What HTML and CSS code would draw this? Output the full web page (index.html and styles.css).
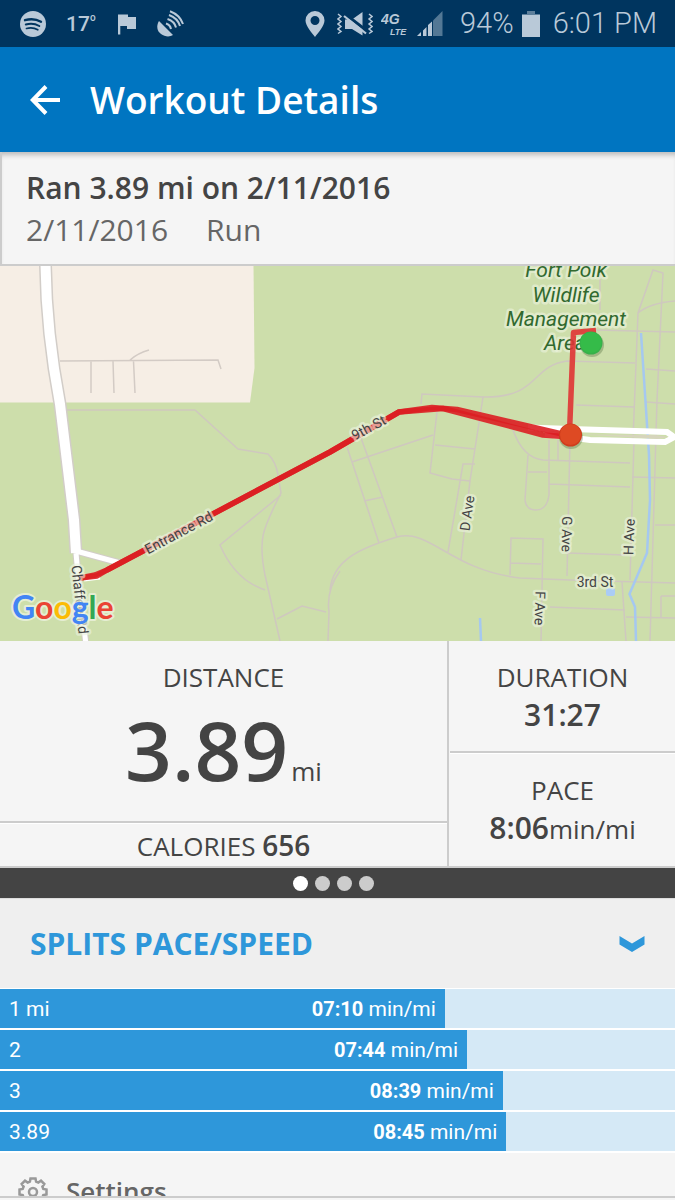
FILE: index.html
```html
<!DOCTYPE html>
<html lang="en">
<head>
    <meta charset="UTF-8">
    <meta name="viewport" content="width=device-width, initial-scale=1.0">
    <title>Workout Details</title>
    <link rel="stylesheet" href="styles.css">
</head>
<body>
    <div class="app">
        <div class="status-bar">
            <div class="status-left">
                <svg width="26" height="26" viewBox="0 0 26 26">
                    <circle cx="13" cy="13" r="13" fill="currentColor"/>
                    <g fill="none" stroke="#00355f" stroke-linecap="round">
                        <path d="M5 9.200c5.500-1.600 11.500-1 16 1.500" stroke-width="2.400"/>
                        <path d="M5.800 13.500c4.700-1.300 9.500-.8 13.500 1.500" stroke-width="2"/>
                        <path d="M6.500 17.500c4-1 8-.6 11.300 1.300" stroke-width="1.700"/>
                    </g>
                </svg>
                <span class="temp">17<sup>o</sup></span>
                <svg width="20" height="22" viewBox="0 0 20 22" fill="currentColor">
                    <path d="M2 1.500h10v2.500h8V16h-9v-3H4.300v8.500H2z"/>
                </svg>
                <svg width="28" height="28" viewBox="0 0 28 28">
                    <path d="M3 11C0 16 1 21 5 24c4 3 9 3 12 1z" fill="currentColor"/>
                    <g fill="none" stroke="currentColor" stroke-width="2">
                        <path d="M10 13.500c3 1 4.500 3 5 5.500"/>
                        <path d="M11.500 9c4.500 1.500 7.500 4.500 8.500 8.500"/>
                        <path d="M13 5c5.500 2 9.500 6 11 11"/>
                        <path d="M14 1.200C20 3.500 25 8 27 14"/>
                    </g>
                </svg>
            </div>
            <div class="status-right">
                <svg class="location" width="20" height="26" viewBox="0 0 20 26" fill="currentColor">
                    <path fill-rule="evenodd" d="M10 0a9.500 9.500 0 0 1 9.500 9.500C19.500 15 13 22 10 26 7 22 .5 15 .5 9.500A9.500 9.500 0 0 1 10 0zm0 5a4.500 4.500 0 1 0 0 9 4.500 4.500 0 0 0 0-9z"/>
                </svg>
                <svg width="36" height="26" viewBox="0 0 36 26">
                    <path d="M1 3l3 2.500L1 8l3 2.500L1 13l3 2.500L1 18l3 2.500L1 22.500M32 3l3 2.500L32 8l3 2.500-3 2.500 3 2.500-3 2.500 3 2.500-3 2" fill="none" stroke="currentColor" stroke-width="1.500"/>
                    <path d="M8 8.500h7L25.500 1v23.500L15 18H8z" fill="currentColor"/>
                    <path d="M8 3l22 17" stroke="#00355f" stroke-width="3"/>
                    <path d="M7 5l22 17.500" stroke="currentColor" stroke-width="2.200"/>
                </svg>
                <svg class="network" width="28" height="24" viewBox="0 0 28 24">
                    <text class="network-gen" x="0" y="12">4G</text>
                    <text class="network-lte" x="9" y="23">LTE</text>
                </svg>
                <svg width="26" height="25" viewBox="0 0 26 25" fill="currentColor">
                    <path opacity=".45" d="M16 9.500L25.500 0v25H16z"/>
                    <path d="M0 25l4-4v4zM6 19.500l3.500-3.500v9H6zM11 14l4-3.500V25h-4z"/>
                </svg>
                <span class="battery-level">94%</span>
                <svg width="18" height="26" viewBox="0 0 18 26" fill="currentColor">
                    <path opacity=".5" d="M5 0h8v3h5v3H0V3h5z"/>
                    <path d="M0 4h18v22H0z"/>
                </svg>
                <span class="clock">6:01 PM</span>
            </div>
        </div>

        <header class="app-bar">
            <button class="back" aria-label="Back">
                <svg width="32" height="30" viewBox="0 0 32 30" fill="none" stroke="currentColor" stroke-width="4">
                    <path d="M16 1.500L2.800 15 16 28.500M2.800 15H30"/>
                </svg>
            </button>
            <h1>Workout Details</h1>
        </header>

        <main>
            <section class="summary">
                <h2>Ran 3.89 mi on 2/11/2016</h2>
                <p><span>2/11/2016</span><span>Run</span></p>
            </section>

            <svg class="map" viewBox="0 266 675 375" role="img" aria-label="Route map">
                <rect y="266" width="675" height="375" fill="#cddeab"/>
                <path d="M0 266H253.500L254.500 368 250 402.500H0z" fill="#f6eee5"/>

                <g class="street built">
                    <path d="M60 361L218 360 221 369M91 361V393M113 361L114 393M133.500 361L135 393M130 360Q138 353 149 350"/>
                </g>
                <g class="street">
                    <path d="M67 410H195L238 449 268 454Q276 462 278 475L281 493C262 530 258 540 265 575L280 641"/>
                    <path d="M281 495L220 545Q235 580 265 590M277 619L302 606 326 612M340 571Q326 590 329 612L328 641"/>
                    <path d="M347 447L379 543M361 438L397 537M364 501L383 497M352 462L433 435"/>
                    <path d="M437 412L430 473 452 479 470 481M435 445L475 449M421 404L422 394 483 397 470 481 461 560M475 464H463L448 552"/>
                    <path d="M483 397C540 398 530 366 567 361L635 363"/>
                    <path d="M330 590C333 560 360 548 397 537 430 528 450 570 520 578L570 580 675 583"/>
                    <path d="M513 430Q523 458 543 460L630 463M528 455L525 500Q526 510 536 510 547 510 549 495V440M528 472H547M549 484L630 487"/>
                    <path d="M558 440V460M570 440L567 576M634 440L630 580M633 440L638 313 653 270 663 273 657 400 650 641"/>
                    <path d="M596 330L675 332M646 369L675 371M576 405L634 407M646 402L675 404M638 313Q650 303 675 301M600 270V310"/>
                    <path d="M510 575L511 538 543 539 541 641M510 563L541 564M568 553L625 555M550 607L625 610M622 582L626 641"/>
                    <path d="M626 617L675 618M661 596H675M661 596V618M655 525H675M632 477L675 478"/>
                </g>

                <path class="water" d="M641 333L649 455 650 500 647 553 629.500 594 635 607 636 641"/>
                <path class="water" d="M480 618L481 641"/>
                <rect x="606" y="588" width="9" height="8" rx="2" fill="#aaccf5"/>

                <!-- main roads -->
                <g class="road-edge">
                    <path stroke-width="13" d="M45.500 262Q46 330 60 404L68 470 74 520 76 553"/>
                    <path stroke-width="7" d="M76 551L120 563M76 553L78 575 86 645"/>
                </g>
                <g class="road">
                    <path stroke-width="10" d="M45.500 262Q46 330 60 404L68 470 74 520 76 553"/>
                    <path stroke-width="5" d="M76 551L120 563M76 553L78 575 86 645M84 579L100 577"/>
                    <path stroke-width="6" d="M528 427.500L570 429 667 432 674 437 665 442 590 440 545 434"/>
                </g>
                <path d="M582 434.500L655 435 668 437 658 439z" fill="#d6d5bc"/>

                <g class="area-label">
                    <text x="566" y="277">Fort Polk</text>
                    <text x="566" y="302">Wildlife</text>
                    <text x="566" y="326">Management</text>
                    <text x="565" y="350">Area</text>
                </g>

                <g class="route">
                    <path d="M80 578L95 575 107 570 330 452 399 412 432 407.500 457 409.500 562 434"/>
                    <path d="M80 578L97 576 107 570 330 452 399 412 443 408.500 543 435 570 437"/>
                    <path class="route-leg" d="M569.500 434L570 420 573.500 332.500 596 330.500"/>
                </g>

                <g class="street-label">
                    <text transform="translate(181 537) rotate(-28)">Entrance Rd</text>
                    <text transform="translate(371 432) rotate(-28)">9th St</text>
                    <text transform="translate(75 600) rotate(84)">Chaffee Rd</text>
                    <text transform="translate(472 514) rotate(-82)">D Ave</text>
                    <text transform="translate(562 534) rotate(91)">G Ave</text>
                    <text transform="translate(634 537) rotate(-88)">H Ave</text>
                    <text transform="translate(535 608) rotate(92)">F Ave</text>
                    <text x="595" y="587">3rd St</text>
                </g>

                <circle cx="592" cy="345" r="12" fill="#3b5b2a" opacity=".3"/>
                <circle cx="591" cy="343" r="11.500" fill="#36b04a"/>
                <circle cx="591" cy="342.500" r="10.500" fill="#35bb49"/>
                <circle cx="571" cy="437" r="12" fill="#3b5b2a" opacity=".3"/>
                <circle cx="570.500" cy="435" r="11.500" fill="#cf3d1c"/>
                <circle cx="570.500" cy="434.500" r="10.500" fill="#de4a23"/>

                <text class="map-logo" x="12" y="619"><tspan fill="#4285f4">G</tspan><tspan fill="#ea4335">o</tspan><tspan fill="#fbbc05">o</tspan><tspan fill="#4285f4">g</tspan><tspan fill="#34a853">l</tspan><tspan fill="#ea4335">e</tspan></text>
            </svg>

            <section class="stats">
                <div class="stats-main">
                    <div class="stat distance">
                        <span class="label">DISTANCE</span>
                        <p><strong>3.89</strong><span class="unit">mi</span></p>
                    </div>
                    <div class="stat calories">
                        <p><span class="label">CALORIES</span> <strong>656</strong></p>
                    </div>
                </div>
                <div class="stats-side">
                    <div class="stat">
                        <span class="label">DURATION</span>
                        <p><strong>31:27</strong></p>
                    </div>
                    <div class="stat">
                        <span class="label">PACE</span>
                        <p><strong>8:06</strong><span class="unit">min/mi</span></p>
                    </div>
                </div>
            </section>

            <div class="pager">
                <button class="dot active" aria-label="Page 1"></button>
                <button class="dot" aria-label="Page 2"></button>
                <button class="dot" aria-label="Page 3"></button>
                <button class="dot" aria-label="Page 4"></button>
            </div>

            <section class="splits">
                <div class="splits-header">
                    <h2>SPLITS PACE/SPEED</h2>
                    <button class="toggle" aria-label="Toggle splits">
                        <svg width="26" height="18" viewBox="0 0 26 18" fill="currentColor">
                            <path d="M.5 1L13 8.500 25.500 1v8.500L13 17 .5 9.500z"/>
                        </svg>
                    </button>
                </div>
                <ol class="split-list">
                    <li><div class="bar" style="width: 65.9%"><span>1 mi</span><span><b>07:10</b> min/mi</span></div></li>
                    <li><div class="bar" style="width: 69.2%"><span>2</span><span><b>07:44</b> min/mi</span></div></li>
                    <li><div class="bar" style="width: 74.5%"><span>3</span><span><b>08:39</b> min/mi</span></div></li>
                    <li><div class="bar" style="width: 75%"><span>3.89</span><span><b>08:45</b> min/mi</span></div></li>
                </ol>
            </section>

            <a class="settings" href="#settings">
                <svg width="30" height="30" viewBox="0 0 30 30" fill="none" stroke="#999" stroke-width="2.500">
                    <path d="M12.500 2.500h5l.6 3.200 2.200.9 2.700-1.900 3.300 3.300-1.900 2.700.9 2.200 3.200.6v5l-3.200.6-.9 2.200 1.900 2.700-3.300 3.300-2.700-1.900-2.200.9-.6 3.200h-5l-.6-3.200-2.200-.9-2.700 1.900-3.300-3.300 1.900-2.700-.9-2.200-3.200-.6v-5l3.200-.6.9-2.200-1.900-2.700 3.300-3.300 2.700 1.900 2.200-.9z"/>
                    <circle cx="15" cy="16" r="4"/>
                </svg>
                <span>Settings</span>
            </a>
        </main>
    </div>
</body>
</html>
```

FILE: styles.css
```css
* {
    box-sizing: border-box;
}

body {
    margin: 0;
    font-family: "Open Sans", sans-serif;
    background-color: #f5f5f5;
    color: #444;
}

h1, h2, p, ol {
    margin: 0;
    padding: 0;
}

button {
    padding: 0;
    border: none;
    background: none;
    cursor: pointer;
}

svg {
    display: block;
}

.app {
    display: flex;
    flex-direction: column;
    height: 100vh;
    padding-bottom: 2px;
}

/* Status bar */
.status-bar {
    flex: none;
    display: flex;
    justify-content: space-between;
    align-items: center;
    height: 47px;
    padding: 0 18px 0 20px;
    background-color: #00355f;
    color: #b9c9d8;
    font-family: Roboto, sans-serif;
}

.status-left, .status-right {
    display: flex;
    align-items: center;
}

.status-left {
    gap: 20px;
}

.status-right {
    gap: 8px;
}

.location {
    margin-right: 4px;
}

.temp {
    display: flex;
    font-size: 21px;
    font-weight: 500;
}

.temp sup {
    font-size: 10px;
    line-height: 12px;
}

.network text {
    fill: currentColor;
    font-family: "Liberation Sans", sans-serif;
    font-style: italic;
    font-weight: 700;
}

.network-gen {
    font-size: 14px;
}

.network-lte {
    font-size: 9px;
}

.battery-level, .clock {
    font-size: 29px;
    font-weight: 300;
    line-height: 47px;
}

.battery-level {
    margin-left: 9px;
}

.clock {
    margin-left: 5px;
}

/* App bar */
.app-bar {
    flex: none;
    display: flex;
    align-items: center;
    gap: 28px;
    height: 105px;
    padding: 0 30px;
    background-color: #0075c1;
    color: #fff;
}

.back {
    color: #fff;
}

.app-bar h1 {
    font-size: 37px;
    font-weight: 600;
    line-height: 50px;
}

main {
    flex: 1;
    min-height: 0;
    overflow-y: auto;
    scrollbar-width: none;
    border-bottom: 2px solid #ccc;
}

.summary {
    height: 114px;
    padding: 15px 24px;
    border-left: 2px solid #ccc;
    border-bottom: 2px solid #ccc;
    box-shadow: inset 0 6px 5px -3px #bbb;
    font-size: 30px;
    line-height: 42px;
}

.summary h2 {
    font-size: 30px;
    font-weight: 600;
    line-height: 42px;
}

.summary p {
    display: flex;
    gap: 38px;
    color: #666;
}

/* Map */
.map {
    width: 100%;
    font-family: Roboto, sans-serif;
}

.street {
    fill: none;
    stroke: #cfc8bf;
    stroke-width: 1.5;
}

.street.built {
    stroke: #d3cbc5;
}

.water {
    fill: none;
    stroke: #a5c8f0;
    stroke-width: 2.5;
}

.road, .road-edge {
    fill: none;
    stroke: #fff;
}

.road-edge {
    stroke: #d2cdc8;
}

.route {
    fill: none;
    stroke: #dc1e22;
    stroke-width: 5.5;
    stroke-linejoin: round;
    stroke-opacity: .9;
}

.route-leg {
    stroke: #e03434;
}

.area-label, .street-label {
    text-anchor: middle;
    paint-order: stroke;
    stroke: #ecf3df;
    stroke-width: 5;
    stroke-linejoin: round;
    stroke-opacity: .6;
}

.area-label {
    fill: #31692f;
    font-size: 21px;
    font-style: italic;
}

.street-label {
    fill: #444;
    font-size: 14px;
}

.map-logo {
    font-family: Lato, sans-serif;
    font-size: 32px;
    font-weight: 700;
    paint-order: stroke;
    stroke: #f0f5e5;
    stroke-width: 4;
    stroke-linejoin: round;
    stroke-opacity: .7;
}

/* Stats */
.stats {
    display: grid;
    grid-template-columns: 2fr 1fr;
    border-bottom: 2px solid #ccc;
}

.stats-main {
    display: grid;
    grid-template-rows: 182px 43px;
    margin-right: 1px;
    border-right: 2px solid #ccc;
}

.stats-side {
    display: grid;
    grid-template-rows: 112px 113px;
}

.stat {
    padding-top: 18px;
    text-align: center;
    font-size: 26px;
    line-height: 36px;
}

.stat:first-child {
    border-bottom: 2px solid #ccc;
}

.stat:last-child {
    border-top: 1px solid #fff;
}

.stat strong {
    font-size: 30px;
    font-weight: 600;
    line-height: 40px;
}

.distance p {
    line-height: 108px;
}

.distance strong {
    margin-right: 3px;
    font-size: 82px;
    line-height: 108px;
}

.stat.calories {
    padding-top: 3px;
}

.calories strong {
    font-size: 28px;
    line-height: 36px;
}

.pager {
    display: flex;
    justify-content: center;
    align-items: center;
    gap: 7px;
    height: 30px;
    padding-right: 8px;
    background-color: #444;
}

.dot {
    width: 15px;
    height: 15px;
    border-radius: 50%;
    background-color: #ccc;
}

.dot.active {
    background-color: #fff;
}

/* Splits */
.splits {
    background-color: #fff;
}

.splits-header {
    display: flex;
    justify-content: space-between;
    align-items: center;
    height: 90px;
    padding: 0 30px;
    border-top: 1px solid #ddd;
    background-color: #efefef;
    color: #2e97da;
}

.splits-header h2 {
    font-size: 30px;
    font-weight: 700;
}

.toggle {
    color: #2e97da;
}

.split-list {
    display: grid;
    gap: 2px;
    padding: 1px 0 2px;
    list-style: none;
}

.split-list li {
    background-color: #d5e9f6;
}

.bar {
    display: flex;
    justify-content: space-between;
    align-items: center;
    height: 39px;
    padding: 0 9px;
    background-color: #2e97da;
    color: #fff;
    font-family: Roboto, sans-serif;
    font-size: 21px;
}

.bar b {
    font-size: 20px;
}

.settings {
    display: flex;
    align-items: center;
    gap: 18px;
    height: 76px;
    padding: 0 18px;
    color: #666;
    font-size: 26px;
    font-weight: 600;
    text-decoration: none;
}
```
